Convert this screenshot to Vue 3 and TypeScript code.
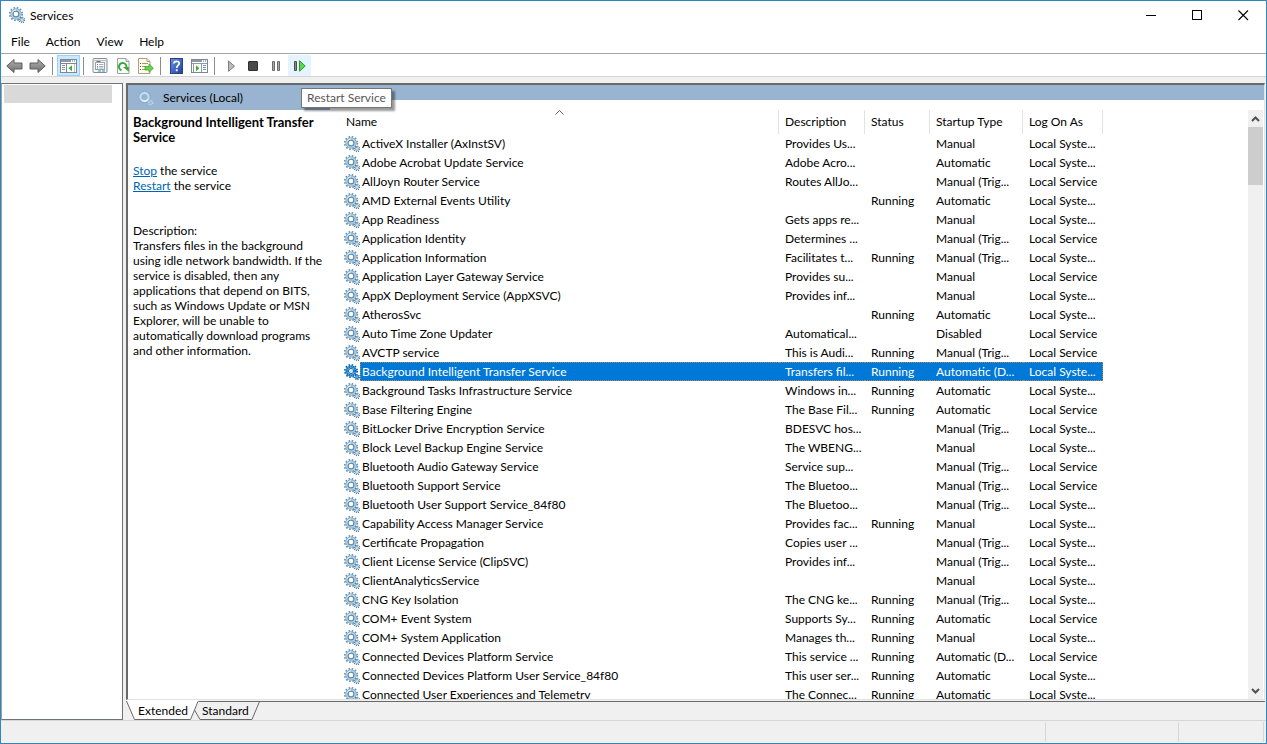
<script setup lang="ts">
import { ref } from 'vue'

interface Service {
  name: string
  description: string
  status: string
  startup: string
  logon: string
}

const SYS = 'Local Syste...'
const SVC = 'Local Service'
const TRIG = 'Manual (Trig...'
const RUN = 'Running'

const svc = (name: string, description: string, status: string, startup: string, logon: string): Service => ({
  name,
  description,
  status,
  startup,
  logon,
})

const services: Service[] = [
  svc('ActiveX Installer (AxInstSV)', 'Provides Us...', '', 'Manual', SYS),
  svc('Adobe Acrobat Update Service', 'Adobe Acro...', '', 'Automatic', SYS),
  svc('AllJoyn Router Service', 'Routes AllJo...', '', TRIG, SVC),
  svc('AMD External Events Utility', '', RUN, 'Automatic', SYS),
  svc('App Readiness', 'Gets apps re...', '', 'Manual', SYS),
  svc('Application Identity', 'Determines ...', '', TRIG, SVC),
  svc('Application Information', 'Facilitates t...', RUN, TRIG, SYS),
  svc('Application Layer Gateway Service', 'Provides su...', '', 'Manual', SVC),
  svc('AppX Deployment Service (AppXSVC)', 'Provides inf...', '', 'Manual', SYS),
  svc('AtherosSvc', '', RUN, 'Automatic', SYS),
  svc('Auto Time Zone Updater', 'Automatical...', '', 'Disabled', SVC),
  svc('AVCTP service', 'This is Audi...', RUN, TRIG, SVC),
  svc('Background Intelligent Transfer Service', 'Transfers fil...', RUN, 'Automatic (D...', SYS),
  svc('Background Tasks Infrastructure Service', 'Windows in...', RUN, 'Automatic', SYS),
  svc('Base Filtering Engine', 'The Base Fil...', RUN, 'Automatic', SVC),
  svc('BitLocker Drive Encryption Service', 'BDESVC hos...', '', TRIG, SYS),
  svc('Block Level Backup Engine Service', 'The WBENG...', '', 'Manual', SYS),
  svc('Bluetooth Audio Gateway Service', 'Service sup...', '', TRIG, SVC),
  svc('Bluetooth Support Service', 'The Bluetoo...', '', TRIG, SVC),
  svc('Bluetooth User Support Service_84f80', 'The Bluetoo...', '', TRIG, SYS),
  svc('Capability Access Manager Service', 'Provides fac...', RUN, 'Manual', SYS),
  svc('Certificate Propagation', 'Copies user ...', '', TRIG, SYS),
  svc('Client License Service (ClipSVC)', 'Provides inf...', '', TRIG, SYS),
  svc('ClientAnalyticsService', '', '', 'Manual', SYS),
  svc('CNG Key Isolation', 'The CNG ke...', RUN, TRIG, SYS),
  svc('COM+ Event System', 'Supports Sy...', RUN, 'Automatic', SVC),
  svc('COM+ System Application', 'Manages th...', RUN, 'Manual', SYS),
  svc('Connected Devices Platform Service', 'This service ...', RUN, 'Automatic (D...', SVC),
  svc('Connected Devices Platform User Service_84f80', 'This user ser...', RUN, 'Automatic', SYS),
  svc('Connected User Experiences and Telemetry', 'The Connec...', RUN, 'Automatic', SYS),
]

const descriptionLines = [
  'Transfers files in the background',
  'using idle network bandwidth. If the',
  'service is disabled, then any',
  'applications that depend on BITS,',
  'such as Windows Update or MSN',
  'Explorer, will be unable to',
  'automatically download programs',
  'and other information.',
]

const columns = ['Description', 'Status', 'Startup Type', 'Log On As']
const menus = ['File', 'Action', 'View', 'Help']
const selected = ref(12)
</script>

<template>
  <div class="window">
    <svg class="defs" aria-hidden="true">
      <symbol id="gears" viewBox="0 0 16 16">
        <circle cx="7" cy="7" r="6.200" fill="none" stroke="#5f8fb2" stroke-width="1.800" stroke-dasharray="1.600 1.646" />
        <circle cx="7" cy="7" r="5.200" fill="#b9d7ea" stroke="#8db2cb" stroke-width="1" />
        <circle cx="7" cy="7" r="2.900" fill="#fff" stroke="#6289a6" stroke-width="1.200" />
        <path d="M3.200 5.500A4 4 0 0 1 7 2.900" fill="none" stroke="#e4f2fa" stroke-width="1" />
        <circle cx="13" cy="13" r="2.500" fill="none" stroke="#4d7ea2" stroke-width="1.800" stroke-dasharray="1 0.960" />
        <circle cx="13" cy="13" r="1.500" fill="#e3f0f8" stroke="#86aac3" stroke-width="0.900" />
      </symbol>
      <symbol id="gears-selected" viewBox="0 0 16 16">
        <circle cx="7" cy="7" r="6" fill="none" stroke="#0f66ad" stroke-width="2" stroke-dasharray="1.500 1.640" />
        <circle cx="7" cy="7" r="4.400" fill="none" stroke="#5aa4d8" stroke-width="2.400" />
        <circle cx="7" cy="7" r="4.400" fill="none" stroke="#0a68b8" stroke-width="2.400" stroke-dasharray="1 1" />
        <circle cx="7" cy="7" r="2.600" fill="#d5e9f7" stroke="#1768a8" stroke-width="1" />
        <circle cx="13" cy="13" r="2.200" fill="#61a5d9" stroke="#0f66ad" stroke-width="1.600" stroke-dasharray="1 0.800" />
      </symbol>
      <symbol id="gears-pale" viewBox="0 0 16 16">
        <circle cx="6.500" cy="7" r="5.700" fill="none" stroke="#84abc9" stroke-width="1.600" stroke-dasharray="1.500 1.480" />
        <circle cx="6.500" cy="7" r="4.100" fill="none" stroke="#bfe0f3" stroke-width="2" />
        <path d="M10 9.500A4.200 4.200 0 0 1 4 10.300" fill="none" stroke="#eef9ff" stroke-width="1.200" />
        <circle cx="12.700" cy="12.700" r="1.900" fill="none" stroke="#b6daee" stroke-width="1.800" stroke-dasharray="1 0.700" />
      </symbol>
      <linearGradient id="arrowGrey" x1="0" y1="0" x2="0" y2="1">
        <stop offset="0" stop-color="#b0b0b0" />
        <stop offset="1" stop-color="#6e6e6e" />
      </linearGradient>
      <linearGradient id="helpBlue" x1="0" y1="0" x2="1" y2="1">
        <stop offset="0" stop-color="#6d8fe0" />
        <stop offset="1" stop-color="#1f3f9f" />
      </linearGradient>
    </svg>

    <header class="titlebar">
      <svg class="ico"><use href="#gears" /></svg>
      <span class="title">Services</span>
      <div class="caption">
        <button type="button" aria-label="Minimize">
          <svg width="11" height="11" viewBox="0 0 11 11"><path d="M0 5.500H10" stroke="#000" /></svg>
        </button>
        <button type="button" aria-label="Maximize">
          <svg width="11" height="11" viewBox="0 0 11 11"><rect x=".5" y=".5" width="9" height="9" fill="none" stroke="#000" /></svg>
        </button>
        <button type="button" aria-label="Close">
          <svg width="11" height="11" viewBox="0 0 11 11"><path d="M.5.5l9.500 9.500M10 .5L.5 10" stroke="#000" stroke-width="1.100" /></svg>
        </button>
      </div>
    </header>

    <nav class="menubar">
      <button v-for="m in menus" :key="m" type="button">{{ m }}</button>
    </nav>

    <div class="toolbar" role="toolbar">
      <button type="button" aria-label="Back">
        <svg class="arrow" viewBox="0 0 17 16"><path d="M.8 8L8 1.500V5h8v6H8v3.500z" fill="url(#arrowGrey)" stroke="#5c5c5c" /></svg>
      </button>
      <button type="button" aria-label="Forward">
        <svg class="arrow" viewBox="0 0 17 16"><path d="M16.200 8L9 1.500V5H1v6h8v3.500z" fill="url(#arrowGrey)" stroke="#5c5c5c" /></svg>
      </button>
      <i class="sep"></i>
      <button type="button" class="pressed" aria-label="Show/Hide Console Tree">
        <svg class="pane" viewBox="0 0 17 14">
          <rect x=".5" y=".5" width="16" height="13" fill="#fff" stroke="#7b8793" />
          <path d="M1 2h10" stroke="#8c99a6" stroke-width="2" />
          <path d="M12 2h1M14 2h1" stroke="#5e6873" />
          <path d="M1 4.500h15M6.500 5v8" stroke="#7b8793" />
          <path d="M2 6.500h3M2 8.500h3M2 10.500h3" stroke="#7893ad" />
          <path d="M12 6.200v6L8.500 9.200z" fill="#3fae2c" />
          <path d="M14.500 5v8" stroke="#b6c0ca" />
        </svg>
      </button>
      <i class="sep"></i>
      <button type="button" aria-label="Properties">
        <svg class="ico" viewBox="0 0 16 16">
          <rect x="1" y=".5" width="14" height="14" rx="1" fill="#f4f6f7" stroke="#858b91" />
          <path d="M2 2.500h12" stroke="#b5bcc2" />
          <rect x="3.500" y="4.500" width="9" height="7" fill="#fff" stroke="#9aa3ab" />
          <path d="M4.500 3.500h4" stroke="#6f7780" />
          <path d="M5 6.500h1M5 8.500h1M5 10h1" stroke="#56789a" />
          <path d="M7 6.500h4.500M7 8.500h4.500M7 10h4.500" stroke="#a4acb3" />
          <path d="M6 13h3M10 13h3" stroke="#6fb4d8" stroke-width="1.400" />
        </svg>
      </button>
      <button type="button" aria-label="Refresh">
        <svg class="ico" viewBox="0 0 16 16">
          <path d="M2.500.5h8.500l3 3v12H2.500z" fill="#fcfcfc" stroke="#9a9fa3" />
          <path d="M11 .5v3h3" fill="#e8e8e8" stroke="#9a9fa3" />
          <path d="M6.500 12.200A3.700 3.700 0 1 1 11.300 9.500" fill="none" stroke="#36a935" stroke-width="2" />
          <path d="M8 9h5.800v4.800z" fill="#36a935" />
        </svg>
      </button>
      <button type="button" aria-label="Export List">
        <svg class="export" viewBox="0 0 17 16">
          <path d="M1.500.5h8.500l3 3v12H1.500z" fill="#fffbe6" stroke="#a5a08e" />
          <path d="M10 .5v3h3" fill="#eee9cf" stroke="#a5a08e" />
          <path d="M3 5.500h1M3 8.500h1M3 11.500h1" stroke="#555" />
          <path d="M5 5.500h6M5 8.500h4M5 11.500h4" stroke="#9b987f" />
          <path d="M8 8.500h4V6l4.500 4.200L12 14.300V12H8z" fill="#6fd04c" stroke="#37a026" stroke-width=".7" />
        </svg>
      </button>
      <i class="sep"></i>
      <button type="button" aria-label="Help">
        <svg width="13" height="16" viewBox="0 0 13 16">
          <rect x=".5" y=".5" width="12" height="15" fill="url(#helpBlue)" stroke="#26418f" />
          <path d="M4 5.500C4 2.700 9.200 2.700 9.200 5.500C9.200 7.500 6.700 7.500 6.700 10" fill="none" stroke="#fff" stroke-width="1.700" />
          <rect x="5.800" y="11.300" width="1.900" height="1.900" fill="#fff" />
        </svg>
      </button>
      <button type="button" aria-label="Show/Hide Action Pane">
        <svg class="pane" viewBox="0 0 17 14">
          <rect x=".5" y=".5" width="16" height="13" fill="#fff" stroke="#7b8793" />
          <path d="M1 2h10" stroke="#8c99a6" stroke-width="2" />
          <path d="M12 2h1M14 2h1" stroke="#5e6873" />
          <path d="M1 4.500h15M10.500 5v8M2.500 5v8" stroke="#8f9aa4" />
          <path d="M12 6.500h3M12 8.500h3M12 10.500h3" stroke="#6b93b8" />
          <path d="M5 6.200v6L8.500 9.200z" fill="#3fae2c" />
        </svg>
      </button>
      <i class="sep"></i>
      <button type="button" aria-label="Start Service">
        <svg class="ico" viewBox="0 0 16 16"><path d="M5.500 3l6 5.200-6 5.100z" fill="#bcbcbc" stroke="#7d7d7d" /></svg>
      </button>
      <button type="button" aria-label="Stop Service">
        <svg class="ico" viewBox="0 0 16 16"><rect x="2.500" y="3.500" width="9" height="9" rx=".5" fill="#4a4a4a" stroke="#303030" /></svg>
      </button>
      <button type="button" aria-label="Pause Service">
        <svg class="ico" viewBox="0 0 16 16"><path d="M3.500 3.500h2v9h-2zM8.500 3.500h2v9h-2z" fill="#a8a8a8" stroke="#6c6c6c" /></svg>
      </button>
      <button type="button" class="hot" aria-label="Restart Service">
        <svg class="ico" viewBox="0 0 16 16">
          <path d="M2.500 3.500h2v9h-2z" fill="#8a8a8a" stroke="#4e4e4e" />
          <path d="M7.500 2.800l5.700 5.200-5.700 5.200z" fill="#5ed64c" stroke="#229f28" />
        </svg>
      </button>
    </div>

    <main class="body">
      <aside class="tree"><div class="tree-node"></div></aside>

      <section class="right">
        <div class="pane-view">
          <div class="detail">
            <div class="band-title">
              <svg class="ico"><use href="#gears-pale" /></svg>
              <span>Services (Local)</span>
              <div class="tooltip" role="tooltip">Restart Service</div>
            </div>
            <div class="detail-text">
              <h2>Background Intelligent Transfer<br />Service</h2>
              <p class="actions">
                <a href="#stop">Stop</a> the service<br />
                <a href="#restart">Restart</a> the service
              </p>
              <p>
                Description:
                <template v-for="line in descriptionLines" :key="line"><br />{{ line }}</template>
              </p>
            </div>
          </div>

          <div class="list-area">
            <div class="band"></div>
            <div class="list-row">
              <div class="list">
                <table>
                  <colgroup>
                    <col class="c-name" />
                    <col class="c-desc" />
                    <col class="c-status" />
                    <col class="c-start" />
                    <col class="c-log" />
                  </colgroup>
                  <thead>
                    <tr>
                      <th class="name-head" aria-sort="ascending">
                        <button type="button">Name</button>
                        <svg class="sort" width="9" height="5" viewBox="0 0 9 5"><path d="M.5 4.500l4-4 4 4" fill="none" stroke="#606060" /></svg>
                      </th>
                      <th v-for="c in columns" :key="c"><button type="button">{{ c }}</button></th>
                    </tr>
                  </thead>
                  <tbody>
                    <tr v-for="(s, i) in services" :key="s.name" :class="{ selected: i === selected }" @click="selected = i">
                      <td class="name">
                        <div class="name-cell">
                          <svg class="ico"><use :href="i === selected ? '#gears-selected' : '#gears'" /></svg>
                          <span>{{ s.name }}</span>
                        </div>
                      </td>
                      <td>{{ s.description }}</td>
                      <td>{{ s.status }}</td>
                      <td>{{ s.startup }}</td>
                      <td>{{ s.logon }}</td>
                    </tr>
                  </tbody>
                </table>
              </div>
              <div class="scrollbar">
                <button type="button" aria-label="Scroll up">
                  <svg width="9" height="6" viewBox="0 0 9 6"><path d="M1 5l3.500-3.500L8 5" fill="none" stroke="#505050" stroke-width="2" /></svg>
                </button>
                <div class="track"><div class="thumb"></div></div>
                <button type="button" aria-label="Scroll down">
                  <svg width="9" height="6" viewBox="0 0 9 6"><path d="M1 1l3.500 3.500L8 1" fill="none" stroke="#505050" stroke-width="2" /></svg>
                </button>
              </div>
            </div>
          </div>
        </div>

        <div class="tabs" role="tablist">
          <svg class="tab-lines" width="134" height="20" viewBox="0 0 134 20" aria-hidden="true">
            <path d="M0 0L8.500 19.500H64.500L73 0z" fill="#fff" />
            <path d="M.5 1L8.500 19.500H64.500L72 1.500M133.500 1.500L126 19.500H74L68.500 10" fill="none" stroke="#696969" />
          </svg>
          <button type="button" role="tab" aria-selected="true">Extended</button>
          <button type="button" role="tab" aria-selected="false">Standard</button>
        </div>
      </section>
    </main>

    <footer class="status"><span class="grow"></span><span class="mid"></span><span class="end"></span></footer>
  </div>
</template>

<style>
html,
body {
  margin: 0;
  overflow: hidden;
}
</style>

<style scoped>
.window {
  box-sizing: border-box;
  height: 100vh;
  display: flex;
  flex-direction: column;
  border: 1px solid #2f86c0;
  background: #fff;
  color: #000;
  font: 12px/15px Lato, "Open Sans", sans-serif;
  white-space: nowrap;
}
.window *,
.window *::before {
  box-sizing: border-box;
}
.defs {
  position: absolute;
  width: 0;
  height: 0;
}
button {
  padding: 0;
  border: 0;
  background: none;
  color: inherit;
  font: inherit;
}
svg {
  display: block;
  flex: none;
}
.ico {
  width: 16px;
  height: 16px;
}
.titlebar {
  height: 30px;
  flex: none;
  display: flex;
  align-items: center;
  padding: 0 0 2px 8px;
}
.title {
  padding-left: 5px;
}
.caption {
  display: flex;
  height: 100%;
  margin-left: auto;
}
.caption button {
  width: 46px;
  display: flex;
  align-items: center;
  justify-content: center;
}
.menubar {
  height: 22px;
  flex: none;
  display: flex;
  padding: 0 2px 2px;
}
.menubar button {
  padding: 0 8px;
}
.toolbar {
  height: 24px;
  flex: none;
  display: flex;
  align-items: center;
  padding: 1px 2px 0;
  border-top: 1px solid #a6a6a6;
  border-bottom: 1px solid #d4d4d4;
}
.toolbar button {
  width: 23px;
  height: 21px;
  display: flex;
  align-items: center;
  justify-content: center;
}
.arrow,
.export {
  width: 17px;
  height: 16px;
}
.pane {
  width: 17px;
  height: 14px;
}
.toolbar .pressed {
  background: #cce8ff;
  border: 1px solid #99d1ff;
}
.toolbar .hot {
  background: #e5f3ff;
}
.sep {
  width: 1px;
  height: 18px;
  margin: 0 4px 0 3px;
  background: #8c8c8c;
}
.body {
  flex: 1;
  min-height: 0;
  display: flex;
  gap: 3px;
  padding: 6px 1px 0 0;
  background: #f0f0f0;
}
.tree {
  width: 122px;
  flex: none;
  padding: 1px 10px 0 2px;
  background: #fff;
  border: 1px solid #6f747b;
  border-left-color: #a0a0a0;
}
.tree-node {
  height: 18px;
  background: #d9d9d9;
}
.right {
  flex: 1;
  min-width: 0;
  display: flex;
  flex-direction: column;
}
.pane-view {
  flex: 1;
  min-height: 0;
  display: flex;
  background: #fff;
  border: 2px solid #696969;
  border-right: 1px solid #e3e3e3;
  border-bottom: 1px solid #e3e3e3;
}
.detail {
  width: 211px;
  flex: none;
}
.band-title {
  position: relative;
  width: 202px;
  height: 25px;
  display: flex;
  align-items: center;
  gap: 9px;
  padding-left: 10px;
  background: #99b4d1;
}
.tooltip {
  position: absolute;
  z-index: 2;
  left: 173px;
  top: 3px;
  height: 20px;
  padding: 0 5px;
  background: #fff;
  border: 1px solid #767676;
  box-shadow: 3px 3px 2px rgba(0, 0, 0, 0.4);
  color: #575757;
  line-height: 18px;
}
.detail-text {
  padding: 5px 0 0 5px;
}
h2 {
  margin: 0;
  font-size: 13px;
  font-weight: 700;
}
p {
  margin: 0;
}
.actions {
  margin: 18px 0 30px;
}
a {
  color: #0066b3;
}
.list-area {
  flex: 1;
  min-width: 0;
  display: flex;
  flex-direction: column;
  margin-left: -9px;
}
.band {
  height: 15px;
  flex: none;
  background: #99b4d1;
}
.list-row {
  flex: 1;
  min-height: 0;
  display: flex;
  padding: 10px 1px 0 9px;
}
.list {
  flex: 1;
  min-width: 0;
  overflow: hidden;
}
table {
  width: 764px;
  table-layout: fixed;
  border-collapse: separate;
  border-spacing: 0;
}
.c-name {
  width: 440px;
}
.c-desc {
  width: 86px;
}
.c-status {
  width: 65px;
}
.c-start {
  width: 93px;
}
.c-log {
  width: 80px;
}
th {
  position: relative;
  height: 24px;
  padding: 0 0 2px 6px;
  border-right: 1px solid #e2e2e2;
  text-align: left;
  font-weight: 400;
  vertical-align: middle;
}
.name-head {
  padding-left: 7px;
}
.sort {
  position: absolute;
  left: 50%;
  top: 0;
  margin-left: -4px;
}
td {
  height: 19px;
  padding: 0 0 0 6px;
  overflow: hidden;
}
td.name {
  padding-left: 5px;
}
.name-cell {
  display: flex;
  align-items: center;
}
.name-cell span {
  flex: 1;
  padding-left: 2px;
  line-height: 19px;
}
.selected td:not(.name),
.selected .name-cell span {
  background: #0078d7;
  color: #fff;
  border-top: 1px dotted #a98a5e;
  border-bottom: 1px dotted #a98a5e;
}
.selected .name-cell span {
  border-left: 1px dotted #a98a5e;
  padding-left: 1px;
  line-height: 17px;
}
.selected td:last-child {
  border-right: 1px dotted #a98a5e;
}
.scrollbar {
  width: 15px;
  display: flex;
  flex-direction: column;
  background: #f0f0f0;
}
.scrollbar button {
  height: 17px;
  display: flex;
  align-items: center;
  justify-content: center;
}
.track {
  flex: 1;
}
.thumb {
  height: 58px;
  background: #cdcdcd;
}
.tabs {
  position: relative;
  height: 20px;
  flex: none;
  display: flex;
  gap: 14px;
  padding: 1px 0 0 12px;
}
.tabs::before {
  content: "";
  position: absolute;
  left: 72px;
  right: 0;
  top: 1px;
  height: 1px;
  background: #696969;
}
.tabs button {
  position: relative;
  height: 19px;
}
.tab-lines {
  position: absolute;
  left: 0;
  top: 0;
}
.status {
  height: 23px;
  flex: none;
  display: flex;
  padding: 1px 2px 1px 0;
  background: #f0f0f0;
  border-top: 1px solid #d7d7d7;
}
.status span {
  border-right: 1px solid #d7d7d7;
}
.grow {
  flex: 1;
}
.mid {
  width: 133px;
}
.end {
  width: 85px;
}
</style>
